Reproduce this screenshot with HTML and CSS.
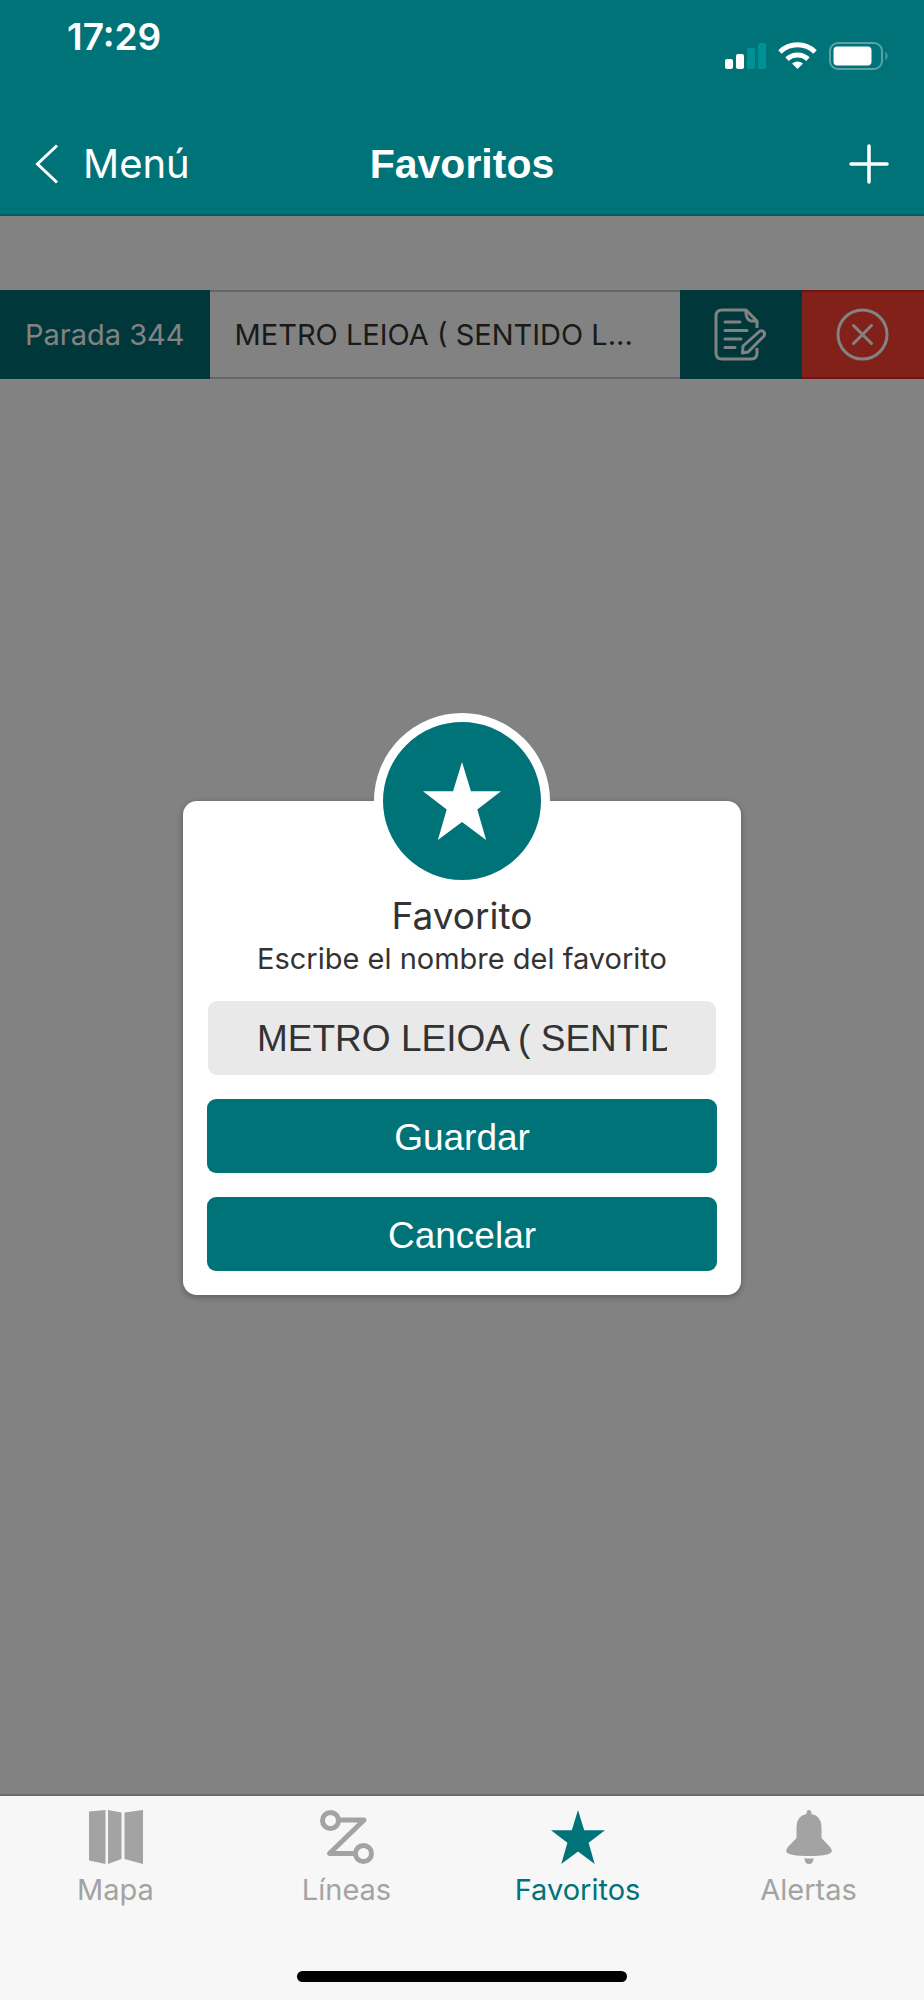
FILE: index.html
```html
<!DOCTYPE html>
<html lang="es">
<head>
<meta charset="utf-8">
<meta name="viewport" content="width=device-width, initial-scale=1">
<title>Favoritos</title>
<link rel="stylesheet" href="styles.css">
</head>
<body>
<div class="app">
  <header class="header">
    <div class="status">
      <time class="clock">17:29</time>
      <svg class="status-icons" width="164" height="30" viewBox="0 0 164 30" aria-hidden="true">
        <g fill="#fff">
          <rect x="0" y="18" width="8" height="10" rx="2"/>
          <rect x="11" y="13" width="8" height="15" rx="2"/>
        </g>
        <g fill="#009197">
          <rect x="22" y="7" width="8" height="21" rx="2"/>
          <rect x="33" y="2" width="8" height="26" rx="2"/>
        </g>
        <g fill="none" stroke="#fff" stroke-width="5">
          <path d="M55 11 A25 25 0 0 1 90 11"/>
          <path d="M62 18.200 A15.500 15.500 0 0 1 83 18.200"/>
        </g>
        <path d="M67 22.500 Q72.500 18.500 78 22.500 L72.500 28Z" fill="#fff"/>
        <rect x="105" y="2" width="52" height="26" rx="8" fill="none" stroke="#59a3a7" stroke-width="2"/>
        <rect x="108.500" y="5.500" width="38" height="19" rx="4" fill="#fff"/>
        <path d="M160.500 10.500 Q164.500 15 160.500 19.500Z" fill="#59a3a7"/>
      </svg>
    </div>
    <nav class="navbar">
      <button class="back" type="button">
        <svg width="24" height="40" viewBox="0 0 24 40" aria-hidden="true"><path d="M22 1.500 L2.500 20 L22 38.500" fill="none" stroke="#fff" stroke-width="3"/></svg>
        <span>Menú</span>
      </button>
      <h1 class="title">Favoritos</h1>
      <button class="add" type="button" aria-label="Añadir">
        <svg width="40" height="40" viewBox="0 0 40 40" aria-hidden="true"><path d="M20 2 V38 M2 20 H38" fill="none" stroke="#fff" stroke-width="3.500" stroke-linecap="round"/></svg>
      </button>
    </nav>
  </header>

  <main class="content">
    <div class="stop">
      <span class="stop-code">Parada 344</span>
      <span class="stop-name">METRO LEIOA ( SENTIDO L...</span>
      <button class="stop-button edit" type="button" aria-label="Editar">
        <svg width="54" height="54" viewBox="0 0 54 54" fill="none" stroke="#fff" stroke-width="3" stroke-linejoin="round" aria-hidden="true">
          <path d="M43 20 V13 L32 2 H8 Q2 2 2 8 V45 Q2 51 8 51 H37 Q43 51 43 45 V40"/>
          <path d="M32 3 V6 Q33 12 37 13 H42"/>
          <path d="M11 14 H26 M11 22.500 H33 M11 31 H27 M11 39.500 H21" stroke-linecap="round"/>
          <path d="M29 38 L46 23 Q48 22 50 24 Q51 26 50 28 L34 44 L28.500 45 Z"/>
        </svg>
      </button>
      <button class="stop-button remove" type="button" aria-label="Eliminar">
        <svg width="54" height="54" viewBox="0 0 54 54" fill="none" stroke="#fff" stroke-width="3" aria-hidden="true">
          <circle cx="26.500" cy="26.500" r="24.500"/>
          <path d="M17.500 17.500 L35.500 35.500 M35.500 17.500 L17.500 35.500" stroke-linecap="round"/>
        </svg>
      </button>
    </div>

    <div class="overlay">
      <form class="dialog" role="dialog" aria-labelledby="dialog-title">
        <div class="badge">
          <svg width="78" height="78" viewBox="0 0 54 54" aria-hidden="true"><path d="M27 0 L33.200 20.300 H54 L37.600 32.800 L43.700 54 L27 41.500 L10.300 54 L16.400 32.800 L0 20.300 H20.800Z" fill="#fff"/></svg>
        </div>
        <h2 class="dialog-title" id="dialog-title">Favorito</h2>
        <label class="dialog-label" for="name">Escribe el nombre del favorito</label>
        <input class="field" id="name" type="text" value="METRO LEIOA ( SENTIDO">
        <button class="action" type="submit">Guardar</button>
        <button class="action" type="button">Cancelar</button>
      </form>
    </div>
  </main>

  <footer class="footer">
    <nav class="tabs">
      <a class="tab" href="#mapa">
        <svg width="54" height="54" viewBox="0 0 54 54" fill="currentColor" aria-hidden="true"><path d="M0 1.500 L16.500 0 V54 L0 50.500Z M19 0 L32.500 2.500 V49 L19 54Z M35.500 2.500 L54 0 V54 L35.500 49Z"/></svg>
        <span>Mapa</span>
      </a>
      <a class="tab" href="#lineas">
        <svg width="54" height="54" viewBox="0 0 54 54" fill="none" stroke="currentColor" stroke-width="5" stroke-linejoin="round" aria-hidden="true"><circle cx="10.500" cy="10.500" r="8"/><circle cx="43.500" cy="43.500" r="8"/><path d="M18.500 10 H44 L9.500 43.500 H35.500"/></svg>
        <span>Líneas</span>
      </a>
      <a class="tab active" href="#favoritos" aria-current="page">
        <svg width="54" height="54" viewBox="0 0 54 54" fill="currentColor" aria-hidden="true"><path d="M27 0 L33.200 20.300 H54 L37.600 32.800 L43.700 54 L27 41.500 L10.300 54 L16.400 32.800 L0 20.300 H20.800Z"/></svg>
        <span>Favoritos</span>
      </a>
      <a class="tab" href="#alertas">
        <svg width="54" height="54" viewBox="0 0 54 54" fill="currentColor" aria-hidden="true"><path d="M27 0 Q29.500 0 29.500 4 Q39.500 6 39.500 17 V28 L48 37 Q50.500 40 49.500 42 Q47 46 27 46 Q7 46 4.500 42 Q3.500 40 6 37 L14.500 28 V17 Q14.500 6 24.500 4 Q24.500 0 27 0Z M22.500 48 Q27 49 31.500 48 Q31.500 54 27 54 Q22.500 54 22.500 48Z"/></svg>
        <span>Alertas</span>
      </a>
    </nav>
    <div class="home-bar"></div>
  </footer>
</div>
</body>
</html>
```
FILE: styles.css
```css
* {
  box-sizing: border-box;
}

body {
  margin: 0;
  font-family: Inter, sans-serif;
  font-size: 29px;
  color: #333;
}

button {
  border: 0;
  padding: 0;
  background: none;
  color: #fff;
  font: inherit;
}

svg {
  display: block;
  flex: none;
}

.app {
  display: flex;
  flex-direction: column;
  min-height: 100vh;
}

/* Header */
.header {
  background: #007379;
  color: #fff;
  border-bottom: 2px solid #075b60;
}

.status {
  display: flex;
  justify-content: space-between;
  align-items: flex-end;
  height: 71px;
  padding: 0 35px 0 67px;
}

.clock {
  align-self: flex-start;
  padding-top: 15px;
  font-size: 37px;
  font-weight: 600;
  line-height: 44px;
}

.navbar {
  display: grid;
  grid-template-columns: 1fr auto 1fr;
  align-items: center;
  padding: 69px 35px 26px;
}

.back {
  display: flex;
  align-items: center;
  gap: 24px;
  font-size: 40px;
  line-height: 48px;
}

.title {
  margin: 0;
  font: bold 41px/48px "Liberation Sans", sans-serif;
}

.add {
  justify-self: end;
}

/* Favourites list */
.content {
  position: relative;
  flex: 1;
  padding-top: 74px;
}

.stop {
  display: flex;
  height: 89px;
  border-top: 2px solid #c8c7cc;
  border-bottom: 2px solid #c8c7cc;
}

.stop-code,
.stop-name,
.stop-button {
  display: flex;
  align-items: center;
  margin: -2px 0;
}

.stop-code {
  padding: 0 25px;
  background: #006c72;
  color: #fff;
}

.stop-name {
  flex: 1;
  padding: 0 25px;
  margin: 0;
  white-space: nowrap;
}

.stop-button {
  justify-content: center;
  width: 122px;
}

.edit {
  background: #006c72;
}

.remove {
  border-top: 2px solid #d62c22;
  border-bottom: 2px solid #d62c22;
  background: #ff4234;
}

/* Dialog */
.overlay {
  position: absolute;
  inset: 0;
  display: flex;
  align-items: center;
  justify-content: center;
  background: rgba(0, 0, 0, 0.49);
}

.dialog {
  display: flex;
  flex-direction: column;
  width: 558px;
  margin-top: 85px;
  padding: 0 24px 24px;
  border-radius: 14px;
  background: #fff;
  box-shadow: 0 2px 6px rgba(0, 0, 0, 0.3);
}

.badge {
  display: flex;
  align-items: center;
  justify-content: center;
  align-self: center;
  width: 176px;
  height: 176px;
  margin-top: -88px;
  border: 9px solid #fff;
  border-radius: 50%;
  background: #007379;
}

.dialog-title {
  margin: 4px 0 0;
  font-size: 37px;
  font-weight: 400;
  line-height: 46px;
  text-align: center;
}

.dialog-label {
  line-height: 40px;
  text-align: center;
}

.field {
  height: 74px;
  margin: 22px 1px 0;
  padding: 3px 49px 0;
  border: 0;
  border-radius: 9px;
  background: #e9e9e9;
  color: #333;
  font: 37px/44px "Liberation Sans", sans-serif;
}

.action {
  height: 74px;
  margin-top: 24px;
  padding-top: 4px;
  border-radius: 9px;
  background: #007379;
  font: 37px/44px "Liberation Sans", sans-serif;
}

/* Tab bar */
.footer {
  display: flex;
  flex-direction: column;
  align-items: center;
  justify-content: space-between;
  height: 206px;
  padding: 14px 0 18px;
  border-top: 2px solid #6c6c6c;
  background: #f7f7f7;
}

.tabs {
  display: flex;
  width: 100%;
}

.tab {
  display: flex;
  flex: 1;
  flex-direction: column;
  align-items: center;
  gap: 8px;
  color: #a3a3a3;
  line-height: 36px;
  text-decoration: none;
}

.tab.active {
  color: #007379;
}

.home-bar {
  width: 330px;
  height: 11px;
  border-radius: 6px;
  background: #000;
}
```
